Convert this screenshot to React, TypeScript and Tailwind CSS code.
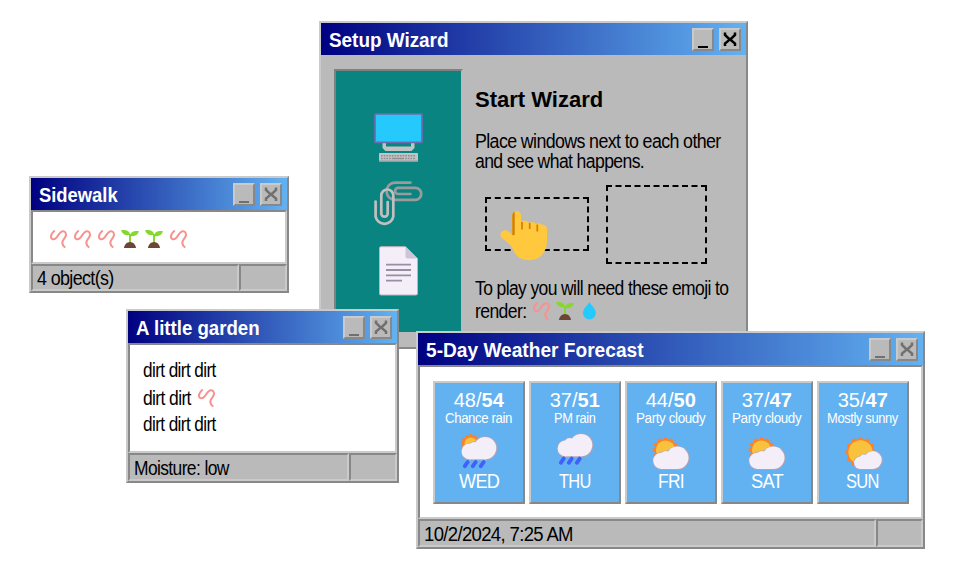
import { useLayoutEffect, useRef, useState } from "react";
import type { ReactNode } from "react";

/** Single line of text squeezed horizontally to the requested width. */
function Fit({ w, className = "", children }: { w: number; className?: string; children: ReactNode }) {
  const ref = useRef<HTMLSpanElement>(null);
  const [scale, setScale] = useState(1);
  useLayoutEffect(() => {
    if (ref.current) setScale(w / ref.current.offsetWidth);
  }, [w]);
  return (
    <span className={`block whitespace-nowrap ${className}`} style={{ width: w }}>
      <span ref={ref} className="inline-block origin-left align-top" style={{ transform: `scaleX(${scale})` }}>
        {children}
      </span>
    </span>
  );
}

const raised = "border-2 border-t-[#cacaca] border-l-[#cacaca] border-r-[#888] border-b-[#888]";
const sunken = "border-2 border-t-[#888] border-l-[#888] border-r-[#cacaca] border-b-[#cacaca]";
const body = "text-[20px] leading-5 tracking-[-0.7px]";

function TitleBar({ title, w, active }: { title: string; w: number; active?: boolean }) {
  const ink = active ? "text-black" : "text-[#707070]";
  return (
    <div className="flex h-8 shrink-0 items-center justify-between bg-linear-to-r/srgb from-[#000080] to-[#62b2f2] pr-[5px] pl-2">
      <Fit w={w} className="pt-px text-[20px] leading-5 font-bold text-white">
        {title}
      </Fit>
      <div className="flex gap-[4.5px]">
        <button className={`flex h-[23px] w-[22.5px] items-end justify-center bg-[#bababa] ${raised} ${ink}`}>
          <span className="mb-px ml-px h-0.5 w-2.5 bg-current" />
        </button>
        <button className={`flex h-[23px] w-[22.5px] items-start justify-center bg-[#bababa] pt-0.5 ${raised} ${ink}`}>
          <svg width="14" height="15" viewBox="0 0 14 15" fill="none" stroke="currentColor" strokeWidth="2.5">
            <path d="M2 0.5v2.500l4.300 4v1L2 11.500v2.500M12 0.500v2.500l-4.300 4v1l4.300 3.500v2.500" />
            <path d="M5.500 7.500h3" />
          </svg>
        </button>
      </div>
    </div>
  );
}

function StatusBar({ text, w, side }: { text: string; w: number; side: string }) {
  return (
    <div className="flex min-h-0 flex-1">
      <div className={`flex flex-1 items-center pt-px pl-1 ${sunken}`}>
        <Fit w={w} className={body}>
          {text}
        </Fit>
      </div>
      <div className={`${side} ${sunken}`} />
    </div>
  );
}

function Worm() {
  return (
    <svg className="shrink-0" width="24" height="20" viewBox="0 0 24 20" fill="none" stroke="#f79290" strokeWidth="2" strokeLinecap="round" strokeLinejoin="round">
      <path d="M8.200 2C5.400 4.200 3.800 8.300 6 9.800C8.500 11.300 10.500 9 12 6.500C13.500 4 14.800 2 17.300 2.200C20.500 2.600 20.600 6 19 8.600C17.300 11 16.100 12 16.300 14C16.600 16.300 17.300 17.200 18.600 18" />
    </svg>
  );
}

function Seedling() {
  return (
    <svg className="shrink-0" width="24" height="20" viewBox="0 0 24 20">
      <path d="M11 5h2v9h-2z" fill="#86d72f" />
      <path d="M3 1.2C7 .8 11.5 1 12 5.8C8 7.2 4.5 5.5 3 1.2Z" fill="#86d82f" />
      <path d="M21 2.2C17 1.6 12.5 2.4 12 7.2C16.5 8 19.8 6 21 2.2Z" fill="#86d82f" />
      <path d="M6 19c.3-3.2 2.8-6 6-6s5.700 2.800 6 6z" fill="#6d4534" />
    </svg>
  );
}

function Drop() {
  return (
    <svg className="shrink-0" width="24" height="20" viewBox="0 0 24 20">
      <path d="M12.400 1c-1 2.500-6.500 6.800-6.500 11a6.500 6.500 0 0 0 13 0c0-4.200-5.500-8.500-6.500-11z" fill="#26c9fc" />
    </svg>
  );
}

function Computer() {
  return (
    <svg width="49" height="50" viewBox="0 0 49 50">
      <path d="M8.500 29.500h3.500v4h25v-4h3.500v5.500l-3 3h-26l-3-3z" fill="#c3c3c5" />
      <rect x="1" y="1" width="47" height="28.300" rx="0.500" fill="#26c9fc" stroke="#6f6bae" strokeWidth="1.700" />
      <rect x="5" y="40" width="39" height="9" rx="0.800" fill="#c3c3c5" />
      <path d="M5 48.300h39" stroke="#9a9a9c" strokeWidth="1.400" />
      <path d="M7 42.800h35M7 45.500h12M31 45.500h11" stroke="#8f8f92" strokeWidth="1.600" strokeDasharray="1.700 1" />
      <path d="M19 45.500h11" stroke="#8f8f92" strokeWidth="1.600" />
    </svg>
  );
}

function Paperclips() {
  return (
    <svg width="49" height="47" viewBox="0 0 49 47" fill="none" strokeLinecap="round" strokeWidth="2.700">
      <path
        stroke="#999b9c"
        d="M36.500 1.600H21.500C16 1.600 12.600 5.500 12.600 10.300C12.600 15.500 16.500 18.900 21.500 18.900H41.200A6 6 0 0 0 41.200 6.800H24.200A3.100 3.100 0 0 0 24.200 13H36.500"
      />
      <path
        stroke="#c0c0c1"
        d="M1.600 20.500V35.500A9 9 0 0 0 19.300 35.500V14.500A5.900 5.900 0 0 0 7.300 14.500V32.500A3.200 3.200 0 0 0 13.700 32.500V21"
      />
    </svg>
  );
}

function Document() {
  return (
    <svg width="49" height="50" viewBox="0 0 49 50">
      <path d="M7 .7h24.500L43.500 12.500V47.500a1.500 1.500 0 0 1-1.500 1.500H7a1.500 1.500 0 0 1-1.500-1.500V2.200A1.500 1.500 0 0 1 7 .7z" fill="#f3eef8" stroke="#c5b3bb" />
      <path d="M31.500.9 43.300 12.600H33.500a2 2 0 0 1-2-2z" fill="#cdc4d6" />
      <path d="M12 18.700h25M12 24h25M12 29.300h25M12 34.600h16" stroke="#998ea4" strokeWidth="1.800" />
    </svg>
  );
}

function Hand() {
  return (
    <svg className="absolute top-[12px] left-[13px]" width="48" height="50" viewBox="0 0 48 50">
      <path
        d="M12.300 4.500a4.300 4.300 0 0 1 8.800 0V11.500c1.500-2.800 6.400-2.500 7.500.5 2-1.800 6.200-1.300 7.300 1 1.900-1.400 5.200-.8 5.900.8 3-.5 5.200 1.500 5.200 4.500V29.500c0 12-7 19.700-18 19.700-8 0-12.700-3.700-15.800-10.200C10.500 32.500 6 30.500 1.800 27-1.500 23.500 1.800 18.500 6 19.300c2.700.7 4.500 2.700 6.300 4.700z"
        fill="#ffc83d"
      />
      <path d="M22 11v7.500M29.700 12v6M37.300 13.500v7" stroke="#d67d00" strokeWidth="1.700" fill="none" />
      <path d="M12.300 4.500c0-2 1-3.200 2.400-3.800V24l-2.400.3z" fill="#d67d00" />
    </svg>
  );
}

type Circle = [number, number, number];

function Cloud({ circles, base }: { circles: Circle[]; base: [number, number, number, number] }) {
  const [x, y, w, h] = base;
  return (
    <>
      <g fill="#b3a2b6">
        {circles.map(([cx, cy, r], i) => (
          <circle key={i} cx={cx} cy={cy} r={r} />
        ))}
        <rect x={x} y={y} width={w} height={h} />
      </g>
      <g fill="#f3eef8">
        {circles.map(([cx, cy, r], i) => (
          <circle key={i} cx={cx - 0.2} cy={cy - 0.2} r={r - 0.8} />
        ))}
        <rect x={x} y={y} width={w} height={h - 1} />
      </g>
    </>
  );
}

/** Disc with a ring of round bumps for the rays. */
function Sun({ cx, cy, r }: { cx: number; cy: number; r: number }) {
  const bumps = 12;
  return (
    <>
      <g fill="#fc8128">
        <circle cx={cx} cy={cy} r={r - 2} />
        {Array.from({ length: bumps }, (_, i) => {
          const a = (i * 2 * Math.PI) / bumps;
          return <circle key={i} cx={cx + (r - 1.7) * Math.sin(a)} cy={cy - (r - 1.7) * Math.cos(a)} r={2} />;
        })}
      </g>
      <circle cx={cx} cy={cy} r={r - 3.2} fill="#f8c23c" />
    </>
  );
}

function Rain({ x, y }: { x: number; y: number }) {
  return (
    <g stroke="#4060fb" strokeWidth="3.800" strokeLinecap="round">
      {[0, 8, 16].map((dx) => (
        <path key={dx} d={`M${x + dx} ${y}l2.900 -4.200`} />
      ))}
    </g>
  );
}

type Sky = "chance" | "rain" | "cloudy" | "sunny";

function SkyIcon({ sky }: { sky: Sky }) {
  return (
    <svg className="mt-1.5 shrink-0" width="40" height="40" viewBox="0 0 40 40">
      {sky === "chance" && (
        <>
          <Sun cx={11.8} cy={11.8} r={9.5} />
          <Cloud circles={[[26.300, 16.300, 12], [10.700, 19.600, 8.700], [15.500, 16.500, 7]]} base={[10, 17, 17, 11.300]} />
          <Rain x={5.800} y={34.200} />
        </>
      )}
      {sky === "rain" && (
        <>
          <Cloud circles={[[26.300, 13.300, 12], [10.700, 16.600, 8.700], [15, 12.500, 7]]} base={[10, 14, 17, 11.300]} />
          <Rain x={5.800} y={30.800} />
        </>
      )}
      {sky === "cloudy" && (
        <>
          <Sun cx={14.5} cy={18} r={12.800} />
          <Cloud circles={[[26.500, 26, 12], [10.500, 29, 8.900], [15, 25.500, 7]]} base={[10, 27, 17, 11]} />
        </>
      )}
      {sky === "sunny" && (
        <>
          <Sun cx={17.5} cy={20.300} r={15.300} />
          <Cloud circles={[[30, 28.200, 9.800], [17.500, 31, 7], [21, 27.500, 5.500]]} base={[17, 29, 13, 9]} />
        </>
      )}
    </svg>
  );
}

interface Day {
  low: number;
  high: number;
  label: string;
  labelW: number;
  day: string;
  dayW: number;
  sky: Sky;
}

const days: Day[] = [
  { low: 48, high: 54, label: "Chance rain", labelW: 67, day: "WED", dayW: 40, sky: "chance" },
  { low: 37, high: 51, label: "PM rain", labelW: 41, day: "THU", dayW: 32, sky: "rain" },
  { low: 44, high: 50, label: "Party cloudy", labelW: 69, day: "FRI", dayW: 26, sky: "cloudy" },
  { low: 37, high: 47, label: "Party cloudy", labelW: 69, day: "SAT", dayW: 32, sky: "cloudy" },
  { low: 35, high: 47, label: "Mostly sunny", labelW: 71, day: "SUN", dayW: 33, sky: "sunny" },
];

const frame = `absolute flex flex-col bg-[#bababa] ${raised}`;

export default function App() {
  return (
    <div className="relative h-[574px] w-[974px] overflow-hidden bg-white font-['Liberation_Sans',Arial,sans-serif] text-black">
      <section className={`${frame} top-[21px] left-[319px] h-[328px] w-[429px]`}>
        <TitleBar title="Setup Wizard" w={120} active />
        <div className="flex gap-3 pt-3.5 pl-[13px]">
          <div className="flex h-[265px] w-[129px] flex-col items-center border-2 border-t-[#808080] border-r-[#bababa] border-b-[#bababa] border-l-[#808080] bg-[#098480] pt-[42px]">
            <Computer />
            <div className="mt-[18px]">
              <Paperclips />
            </div>
            <div className="mt-[18px]">
              <Document />
            </div>
          </div>
          <div className="pt-[19px]">
            <h1>
              <Fit w={128} className="text-[22px] leading-6 font-bold">
                Start Wizard
              </Fit>
            </h1>
            <div className={`mt-[19px] ${body}`}>
              <Fit w={246}>Place windows next to each other</Fit>
              <Fit w={169}>and see what happens.</Fit>
            </div>
            <div className="mt-3.5 ml-2.5 flex items-start gap-[17px]">
              <div className="relative mt-3 h-[54px] w-[104px] border-2 border-dashed border-black">
                <Hand />
              </div>
              <div className="h-[79px] w-[101px] border-2 border-dashed border-black" />
            </div>
            <div className={`mt-3.5 ${body}`}>
              <Fit w={253}>To play you will need these emoji to</Fit>
              <div className="mt-[3px] flex items-center">
                <Fit w={51} className="mr-[3px]">
                  render:
                </Fit>
                <Worm />
                <Seedling />
                <Drop />
              </div>
            </div>
          </div>
        </div>
      </section>

      <section className={`${frame} top-[176px] left-[29px] h-[117px] w-[260px]`}>
        <TitleBar title="Sidewalk" w={79} />
        <div className={`flex h-[54px] shrink-0 bg-white pt-[17px] pl-[13px] ${sunken}`}>
          <Worm />
          <Worm />
          <Worm />
          <Seedling />
          <Seedling />
          <Worm />
        </div>
        <StatusBar text="4 object(s)" w={77} side="w-12" />
      </section>

      <section className={`${frame} top-[309px] left-[126px] h-[174px] w-[273px]`}>
        <TitleBar title="A little garden" w={124} />
        <div className={`h-[110px] shrink-0 bg-white pt-[15px] pl-[13px] ${body} ${sunken}`}>
          <Fit w={73}>dirt dirt dirt</Fit>
          <div className="mt-2 flex items-center">
            <Fit w={48} className="mr-[3px]">
              dirt dirt
            </Fit>
            <Worm />
          </div>
          <Fit w={73} className="mt-1.5">
            dirt dirt dirt
          </Fit>
        </div>
        <StatusBar text="Moisture: low" w={95} side="w-12" />
      </section>

      <section className={`${frame} top-[331px] left-[416px] h-[218px] w-[509px]`}>
        <TitleBar title="5-Day Weather Forecast" w={218} />
        <div className={`flex h-[154px] shrink-0 gap-[4.500px] bg-white pt-3.5 pl-[13px] ${sunken}`}>
          {days.map((d) => (
            <article key={d.day} className={`flex h-[123px] w-[91.500px] flex-col items-center bg-[#62b2f2] pt-[7px] text-[20px] leading-5 text-white ${raised}`}>
              <Fit w={50}>
                {d.low}/<b>{d.high}</b>
              </Fit>
              <Fit w={d.labelW} className="mt-px text-[14px] leading-[15px] tracking-[-0.4px]">
                {d.label}
              </Fit>
              <SkyIcon sky={d.sky} />
              <Fit w={d.dayW} className="-mt-px tracking-[-0.8px]">
                {d.day}
              </Fit>
            </article>
          ))}
        </div>
        <StatusBar text="10/2/2024, 7:25 AM" w={149} side="w-[47px]" />
      </section>
    </div>
  );
}
